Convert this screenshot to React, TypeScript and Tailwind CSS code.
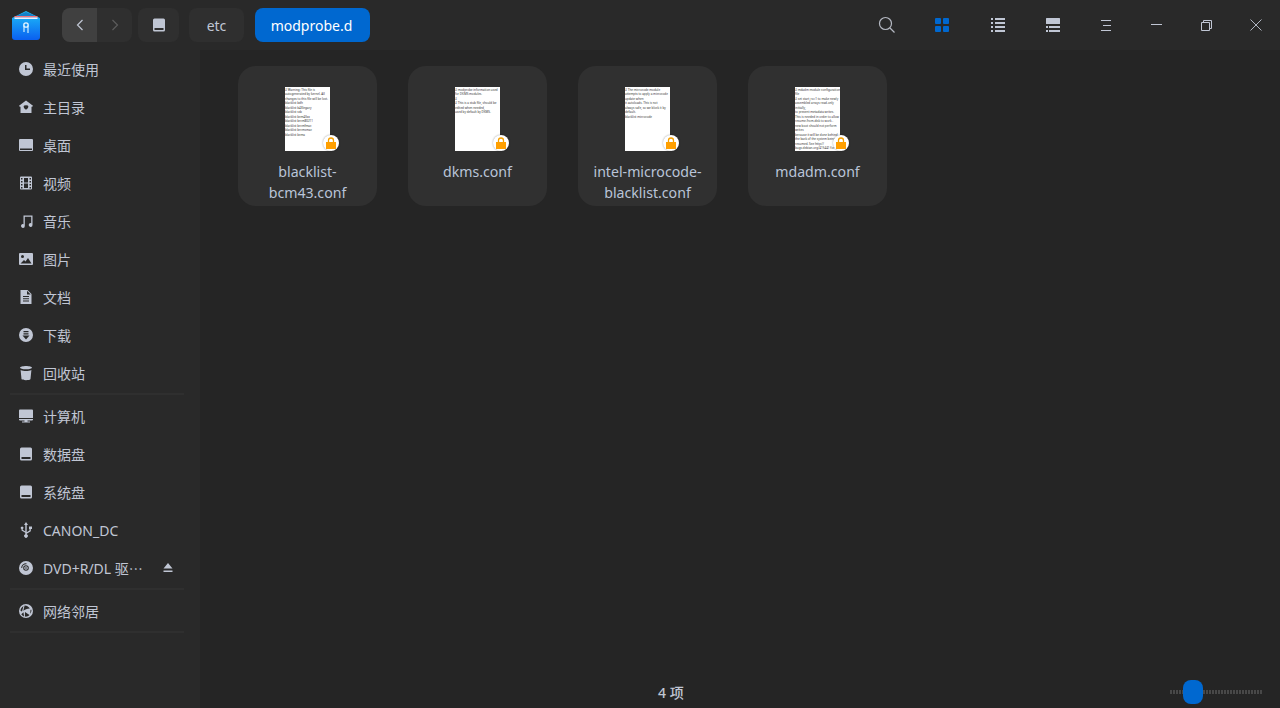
import type { ReactNode } from 'react';

const FONT = "font-['Noto_Sans','Noto_Sans_CJK_SC',sans-serif]";

function Ico({ children, w = 16, h = 16, className = 'text-[#c0c6d4]' }: { children: ReactNode; w?: number; h?: number; className?: string }) {
  return (
    <svg width={w} height={h} viewBox={`0 0 ${w} ${h}`} fill="currentColor" className={className}>
      {children}
    </svg>
  );
}

const icons: Record<string, ReactNode> = {
  recent: <path fillRule="evenodd" d="M8 1a7 7 0 1 1 0 14A7 7 0 0 1 8 1zM7 4v5h5V7.600H8.500V4z" />,
  home: <path fillRule="evenodd" d="M8 1.500l7 5.300-1 1.200-.5-.4V14h-11V7.600l-.5.4-1-1.200zM8 6.600C7 5.700 5.400 6.500 5.700 8 6 9.300 7.300 10.200 8 10.800c.7-.6 2-1.500 2.300-2.800C10.600 6.500 9 5.700 8 6.600z" />,
  desktop: <path fillRule="evenodd" d="M2 2h12a1 1 0 0 1 1 1v10a1 1 0 0 1-1 1H2a1 1 0 0 1-1-1V3a1 1 0 0 1 1-1zm0 9.500V13h12v-1.500z" />,
  video: <path fillRule="evenodd" d="M3 1.500h10a1 1 0 0 1 1 1v11a1 1 0 0 1-1 1H3a1 1 0 0 1-1-1v-11a1 1 0 0 1 1-1zM3 3v1.500h1.500V3zm0 3v1.500h1.500V6zm0 3v1.500h1.500V9zm0 3v1.500h1.500V12zm8.500-9v1.500H13V3zm0 3v1.500H13V6zm0 3v1.500H13V9zm0 3v1.500H13V12zM6 3v4.500h4V3zm0 5.500V13h4V8.500z" />,
  music: <path d="M5.500 2.500h9v9.500a1.900 1.900 0 1 1-1.300-1.800V3.800H6.800V13a1.900 1.900 0 1 1-1.300-1.800z" />,
  image: <path fillRule="evenodd" d="M2 2h12a1 1 0 0 1 1 1v10a1 1 0 0 1-1 1H2a1 1 0 0 1-1-1V3a1 1 0 0 1 1-1zm2.500 2a1.500 1.500 0 1 0 0 3 1.500 1.500 0 0 0 0-3zM2.500 12.500h11L10 7 7.500 10.500 6 9z" />,
  doc: <path fillRule="evenodd" d="M2.500 1h7l4 4v10h-11zM9 1.800V5.500h3.700zM5 7v1h6V7zm0 2.300v1h6v-1zm0 2.300v1h6v-1z" />,
  download: <path fillRule="evenodd" d="M8 1a7 7 0 1 1 0 14A7 7 0 0 1 8 1zM5.500 4v1.200h5V4zm0 2.200v1.200h5V6.200zM4.500 8.500L8 12.500l3.500-4z" />,
  trash: <path d="M2 2.800C2 1.800 5 1 8 1s6 .8 6 1.800c0 .9-2.500 1.500-6 1.500S2 3.700 2 2.800zM2.600 5C4 5.700 6 6 8 6s4-.3 5.400-1l-.9 9c-.1.800-2.300 1.200-4.500 1.200s-4.400-.4-4.500-1.200z" />,
  computer: <path fillRule="evenodd" d="M2 1.500h12a1 1 0 0 1 1 1V10H1V2.500a1 1 0 0 1 1-1zM1 11h14v.5a1 1 0 0 1-1 1H9.500v1H12v1H4v-1h2.500v-1H2a1 1 0 0 1-1-1z" />,
  disk: <path fillRule="evenodd" d="M3.500 1.500h9A1.500 1.500 0 0 1 14 3v10a1.500 1.500 0 0 1-1.500 1.500h-9A1.500 1.500 0 0 1 2 13V3a1.500 1.500 0 0 1 1.500-1.500zM3.500 11v2h9v-2z" />,
  usb: <path fillRule="evenodd" d="M8 0l2 3H8.700v7.200l2.800-1.700V7H11V4.500h3V7h-1.200v2.200L8.700 11.700v.5a1.800 1.800 0 1 1-1.400 0v-1.400L3.500 8.400V7a1.300 1.300 0 1 1 1.200 0v.8l2.600 1.600V3H6z" />,
  dvd: <path fillRule="evenodd" d="M8 1a7 7 0 1 1 0 14A7 7 0 0 1 8 1zM8.500 3.200A4.800 4.800 0 0 0 3.200 8h1a3.800 3.800 0 0 1 4.300-3.800zM8 5.200a2.800 2.800 0 1 0 0 5.600 2.800 2.800 0 0 0 0-5.600zm0 1a1.800 1.800 0 1 1 0 3.600 1.800 1.800 0 0 1 0-3.600zM8 7.200a.8.8 0 1 0 0 1.600.8.800 0 0 0 0-1.600z" />,
  network: <path fillRule="evenodd" d="M8 1a7 7 0 1 1 0 14A7 7 0 0 1 8 1zM5.500 3C3.800 4 2.600 5.800 2.500 7.700L4 8.500zM6.600 2.400L5.300 7.800C6.800 6.600 9 5.800 11.800 5.600 11 3.600 9 2.300 6.600 2.400zM5.500 9.300l-2.200 1.900c.6 1 1.500 1.800 2.700 2.300zM7 9l-.1 4.600c1.800.2 3.400-.3 4.600-1.500zM12.500 6.700l-.3 4c1-1.200 1.400-2.600 1.200-4z" />,
};

const places = [
  { icon: 'recent', label: '最近使用' },
  { icon: 'home', label: '主目录' },
  { icon: 'desktop', label: '桌面' },
  { icon: 'video', label: '视频' },
  { icon: 'music', label: '音乐' },
  { icon: 'image', label: '图片' },
  { icon: 'doc', label: '文档' },
  { icon: 'download', label: '下载' },
  { icon: 'trash', label: '回收站' },
];

const devices = [
  { icon: 'computer', label: '计算机' },
  { icon: 'disk', label: '数据盘' },
  { icon: 'disk', label: '系统盘' },
  { icon: 'usb', label: 'CANON_DC' },
];

const files = [
  {
    name: ['blacklist-', 'bcm43.conf'],
    preview: ['# Warning: This file is', 'autogenerated by kernel. All', 'changes to this file will be lost.', 'blacklist bdh', 'blacklist b43legacy', 'blacklist ssb', 'blacklist bcm43xx', 'blacklist brcm80211', 'blacklist brcmfmac', 'blacklist brcmsmac', 'blacklist bcma'],
  },
  {
    name: ['dkms.conf'],
    preview: ['# modprobe information used', 'for DKMS modules.', '#', '# This is a stub file, should be', 'edited when needed,', 'used by default by DKMS.'],
  },
  {
    name: ['intel-microcode-', 'blacklist.conf'],
    preview: ['# The microcode module', 'attempts to apply a microcode', 'update when', 'it autoloads. This is not', 'always safe, so we block it by', 'default.', 'blacklist microcode'],
  },
  {
    name: ['mdadm.conf'],
    preview: ['# mdadm module configuration', 'file', '# set start_ro=1 to make newly', 'assembled arrays read-only', 'initially,', 'to prevent metadata writes.', 'This is needed in order to allow', 'resume-from-disk to work -', 'new boot should not perform', 'writes', 'because it will be done behind', 'the back of the system being', 'resumed. See http://', 'bugs.debian.org/415441 for'],
  },
];

function SideRow({ icon, label, trailing }: { icon: string; label: ReactNode; trailing?: ReactNode }) {
  return (
    <div className="h-[38px] flex items-center pl-[18px] pr-[26px] gap-[9px] text-[14px] text-[#c0c6d4]">
      <Ico>{icons[icon]}</Ico>
      <span className="flex-1 whitespace-nowrap">{label}</span>
      {trailing}
    </div>
  );
}

function Sep() {
  return <div className="h-[2px] ml-[10px] mt-[1px] mb-[2px] w-[174px] bg-[#2f2f2f]" />;
}

function Lock() {
  return (
    <div className="absolute left-[38px] top-[48px] w-[16px] h-[16px] rounded-full bg-white flex items-center justify-center shadow-[0_0_2px_rgba(0,0,0,0.4)]">
      <svg width="10" height="12" viewBox="0 0 10 12" fill="none">
        <path d="M2.500 6V3.500a2.500 2.500 0 0 1 5 0V6" stroke="#f5a000" strokeWidth="1.300" />
        <rect x="0" y="5" width="10" height="7" fill="#ff9f00" />
      </svg>
    </div>
  );
}

function FileCard({ name, preview }: { name: string[]; preview: string[] }) {
  return (
    <div className="w-[139px] h-[140px] rounded-[18px] bg-[#303030] flex flex-col items-center pt-[21px]">
      <div className="relative w-[45px] h-[64px] shrink-0">
        <div className="w-full h-full bg-white pt-[0.5px] text-[3px] leading-[4.5px] text-[#333] whitespace-nowrap">
          {preview.map((l, i) => (
            <div key={i}>{l}</div>
          ))}
        </div>
        <Lock />
      </div>
      <div className="mt-[10px] text-[14.15px] leading-[21px] text-[#b9c4d8] text-center whitespace-nowrap">
        {name.map((l) => (
          <div key={l}>{l}</div>
        ))}
      </div>
    </div>
  );
}

function Crumb({ children, className }: { children: ReactNode; className: string }) {
  return <div className={`h-[34px] rounded-[8px] flex items-center justify-center text-[14px] ${className}`}>{children}</div>;
}

function Toolbar() {
  return (
    <div className="h-[50px] shrink-0 bg-[#292929] flex items-center pl-[12px]">
      <svg width="28" height="29" viewBox="0 0 28 29" className="shrink-0">
        <defs>
          <linearGradient id="lg" x1="0" y1="0" x2="0" y2="1">
            <stop offset="0" stopColor="#1fc0f8" />
            <stop offset="1" stopColor="#0a5ff0" />
          </linearGradient>
        </defs>
        <path d="M0 7L14 0l14 7v19a3 3 0 0 1-3 3H3a3 3 0 0 1-3-3z" fill="url(#lg)" />
        <path d="M3 5.500L14 1l11 4.500z" fill="#1580c8" />
        <rect x="2.500" y="5" width="23" height="1.500" fill="#f4727a" />
        <rect x="2.500" y="6.500" width="23" height="1.500" fill="#e8f2ff" />
        <path d="M12 21v-6.500M16 14.500V22" stroke="#bfe6ff" strokeWidth="1.300" />
        <circle cx="14" cy="14" r="2.200" fill="none" stroke="#e4f5ff" strokeWidth="1.300" />
      </svg>

      <div className="ml-[22px] flex h-[34px] w-[70px] rounded-[8px] overflow-hidden bg-[#2f2f2f]">
        <div className="w-[35px] bg-[#404040] flex items-center justify-center">
          <svg width="8" height="12" viewBox="0 0 8 12" fill="none" stroke="#c0c6d4" strokeWidth="1.200"><path d="M6.500 1L1.500 6l5 5" /></svg>
        </div>
        <div className="w-[35px] flex items-center justify-center">
          <svg width="8" height="12" viewBox="0 0 8 12" fill="none" stroke="#5c5c5c" strokeWidth="1.200"><path d="M1.500 1l5 5-5 5" /></svg>
        </div>
      </div>
      <Crumb className="ml-[6px] w-[41px] bg-[#2f2f2f]">
        <Ico>{icons.disk}</Ico>
      </Crumb>
      <Crumb className="ml-[10px] w-[55px] bg-[#2f2f2f] text-[#c0c6d4]">etc</Crumb>
      <Crumb className="ml-[11px] w-[115px] bg-[#0068d0] text-white pr-[2px]">modprobe.d</Crumb>

      <div className="ml-auto flex items-center">
        <svg width="18" height="18" viewBox="0 0 18 18" fill="none" stroke="#b4b8c2" strokeWidth="1.200"><circle cx="7.500" cy="7.500" r="6" /><path d="M12 12l4.500 4.500" /></svg>
        <div className="ml-[39px] grid grid-cols-2 gap-[2px]">
          <div className="w-[6px] h-[6px] rounded-[1px] bg-[#0068d0]" />
          <div className="w-[6px] h-[6px] rounded-[1px] bg-[#0068d0]" />
          <div className="w-[6px] h-[6px] rounded-[1px] bg-[#0068d0]" />
          <div className="w-[6px] h-[6px] rounded-[1px] bg-[#0068d0]" />
        </div>
        <svg className="ml-[42px]" width="14" height="14" viewBox="0 0 14 14" fill="#c0c6d4"><path d="M0 0h2v2H0zM4 0h10v2H4zM0 4h2v2H0zM4 4h10v2H4zM0 8h2v2H0zM4 8h10v2H4zM0 12h2v2H0zM4 12h10v2H4z" /></svg>
        <svg className="ml-[41px]" width="14" height="15" viewBox="0 0 14 15" fill="#c0c6d4"><rect width="14" height="6" rx="0.500" /><path d="M0 8h2v2H0zM3 8h11v2H3zM0 12h2v2H0zM3 12h11v2H3z" /></svg>
        <svg className="ml-[41px]" width="10" height="11" viewBox="0 0 10 11" fill="#c0c6d4"><path d="M0 0h10v1H0zM2 5h8v1H2zM0 10h10v1H0z" /></svg>
        <svg className="ml-[40px]" width="11" height="2" viewBox="0 0 11 2" fill="#c0c6d4"><path d="M0 0h11v1H0z" /></svg>
        <svg className="ml-[39px]" width="11" height="11" viewBox="0 0 11 11" fill="none" stroke="#c0c6d4"><path d="M.5 2.500h8v8h-8zM2.500 2.500V.5h8v8H8.500" /></svg>
        <svg className="ml-[38px] mr-[18px]" width="12" height="12" viewBox="0 0 12 12" fill="none" stroke="#c0c6d4" strokeWidth="0.900"><path d="M.5.5l11 11M11.500.5l-11 11" /></svg>
      </div>
    </div>
  );
}

function Sidebar() {
  return (
    <div className="w-[200px] shrink-0 bg-[#292929]">
      {places.map((p) => (
        <SideRow key={p.label} {...p} />
      ))}
      <Sep />
      {devices.map((d) => (
        <SideRow key={d.label} {...d} />
      ))}
      <SideRow
        icon="dvd"
        label={
          <>
            DVD+R/DL 驱<span className="font-['Noto_Sans_CJK_SC',sans-serif]">…</span>
          </>
        }
        trailing={
          <svg width="12" height="10" viewBox="0 0 12 10" fill="#c0c6d4"><path d="M6 0l4.500 5.500h-9zM1.500 7.500h9V9h-9z" /></svg>
        }
      />
      <Sep />
      <SideRow icon="network" label="网络邻居" />
      <Sep />
    </div>
  );
}

export default function App() {
  return (
    <div className={`w-[1280px] h-[708px] flex flex-col overflow-hidden bg-[#252525] ${FONT}`}>
      <Toolbar />
      <div className="flex-1 flex min-h-0">
        <Sidebar />
        <div className="flex-1 flex flex-col min-w-0">
          <div className="flex-1 flex gap-[31px] pl-[38px] pt-[16px]">
            {files.map((f) => (
              <FileCard key={f.name[0]} {...f} />
            ))}
          </div>
          <div className="h-[32px] flex items-center pl-[458px]">
            <span className="text-[14px] text-[#c0c6d4] font-medium">4 项</span>
            <div className="relative ml-auto mr-[18px] w-[92px] h-[4px] bg-[repeating-linear-gradient(90deg,#484848_0,#484848_2px,transparent_2px,transparent_3px)]">
              <div className="absolute left-[13px] top-[-10px] w-[20px] h-[24px] rounded-[8px] bg-[#0068d0]" />
            </div>
          </div>
        </div>
      </div>
    </div>
  );
}
